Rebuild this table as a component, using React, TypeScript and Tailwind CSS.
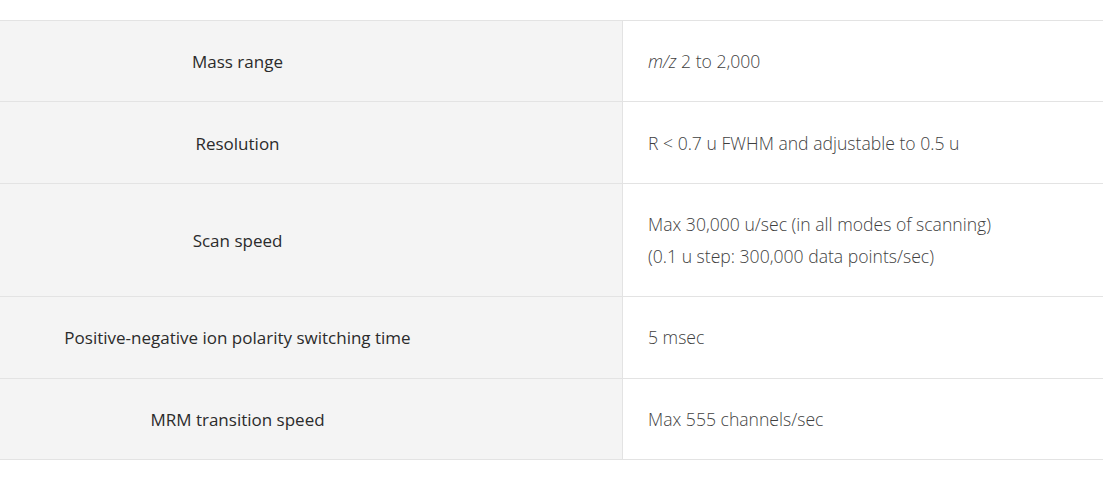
import React from "react";

const rows: { label: string; value: React.ReactNode }[] = [
  {
    label: "Mass range",
    value: (
      <>
        <i>m/z</i> 2 to 2,000
      </>
    ),
  },
  { label: "Resolution", value: "R < 0.7 u FWHM and adjustable to 0.5 u" },
  {
    label: "Scan speed",
    value: (
      <>
        Max 30,000 u/sec (in all modes of scanning)
        <br />
        (0.1 u step: 300,000 data points/sec)
      </>
    ),
  },
  { label: "Positive-negative ion polarity switching time", value: "5 msec" },
  { label: "MRM transition speed", value: "Max 555 channels/sec" },
];

export default function App() {
  return (
    <div
      className="w-[1103px] h-[487px] bg-white pt-[20px]"
      style={{ fontFamily: '"Open Sans", "Liberation Sans", sans-serif' }}
    >
      <div className="border-t border-[#e3e3e3]">
        {rows.map((r, i) => (
          <div key={i} className="flex border-b border-[#e3e3e3] leading-[32px]">
            <div className="w-[623px] shrink-0 bg-[#f4f4f4] border-r border-[#e3e3e3] py-[24.2px] pr-[147px] text-center text-[17px] text-[#2b2b2b] flex items-center justify-center">
              <span className="translate-y-[1px]">{r.label}</span>
            </div>
            <div className="flex-1 py-[24.2px] pl-[25px] text-[17.6px] font-light text-[#3f3f3f]">
              <div>{r.value}</div>
            </div>
          </div>
        ))}
      </div>
    </div>
  );
}
